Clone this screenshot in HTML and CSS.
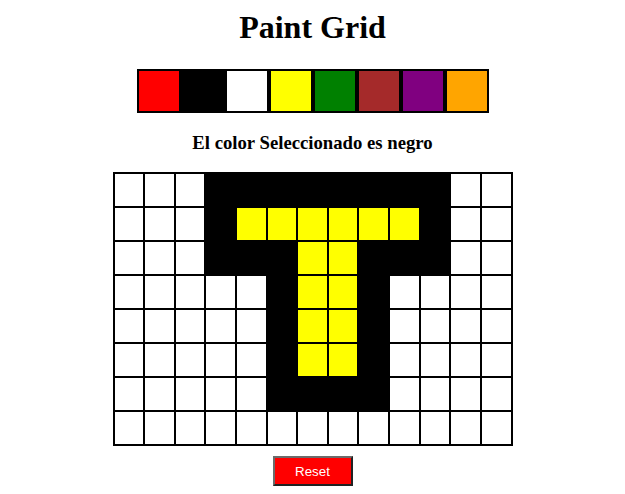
FILE: index.html
```html
<!DOCTYPE html>
<html lang="es">
<head>
<meta charset="utf-8">
<title>Paint Grid</title>
<link rel="stylesheet" href="styles.css">
</head>
<body>
<main class="app">
  <h1 class="title">Paint Grid</h1>
  <div class="palette">
    <div class="swatch red"></div>
    <div class="swatch black"></div>
    <div class="swatch white"></div>
    <div class="swatch yellow"></div>
    <div class="swatch green"></div>
    <div class="swatch brown"></div>
    <div class="swatch purple"></div>
    <div class="swatch orange"></div>
  </div>
  <h3 class="selected">El color Seleccionado es negro</h3>
  <div class="grid">
    <div class="cell"></div><div class="cell"></div><div class="cell"></div><div class="cell k"></div><div class="cell k"></div><div class="cell k"></div><div class="cell k"></div><div class="cell k"></div><div class="cell k"></div><div class="cell k"></div><div class="cell k"></div><div class="cell"></div><div class="cell"></div>
    <div class="cell"></div><div class="cell"></div><div class="cell"></div><div class="cell k"></div><div class="cell y"></div><div class="cell y"></div><div class="cell y"></div><div class="cell y"></div><div class="cell y"></div><div class="cell y"></div><div class="cell k"></div><div class="cell"></div><div class="cell"></div>
    <div class="cell"></div><div class="cell"></div><div class="cell"></div><div class="cell k"></div><div class="cell k"></div><div class="cell k"></div><div class="cell y"></div><div class="cell y"></div><div class="cell k"></div><div class="cell k"></div><div class="cell k"></div><div class="cell"></div><div class="cell"></div>
    <div class="cell"></div><div class="cell"></div><div class="cell"></div><div class="cell"></div><div class="cell"></div><div class="cell k"></div><div class="cell y"></div><div class="cell y"></div><div class="cell k"></div><div class="cell"></div><div class="cell"></div><div class="cell"></div><div class="cell"></div>
    <div class="cell"></div><div class="cell"></div><div class="cell"></div><div class="cell"></div><div class="cell"></div><div class="cell k"></div><div class="cell y"></div><div class="cell y"></div><div class="cell k"></div><div class="cell"></div><div class="cell"></div><div class="cell"></div><div class="cell"></div>
    <div class="cell"></div><div class="cell"></div><div class="cell"></div><div class="cell"></div><div class="cell"></div><div class="cell k"></div><div class="cell y"></div><div class="cell y"></div><div class="cell k"></div><div class="cell"></div><div class="cell"></div><div class="cell"></div><div class="cell"></div>
    <div class="cell"></div><div class="cell"></div><div class="cell"></div><div class="cell"></div><div class="cell"></div><div class="cell k"></div><div class="cell k"></div><div class="cell k"></div><div class="cell k"></div><div class="cell"></div><div class="cell"></div><div class="cell"></div><div class="cell"></div>
    <div class="cell"></div><div class="cell"></div><div class="cell"></div><div class="cell"></div><div class="cell"></div><div class="cell"></div><div class="cell"></div><div class="cell"></div><div class="cell"></div><div class="cell"></div><div class="cell"></div><div class="cell"></div><div class="cell"></div>
  </div>
  <button class="reset" type="button">Reset</button>
</main>
</body>
</html>
```
FILE: styles.css
```css
html, body {
  margin: 0;
  padding: 0;
  background: #ffffff;
}

body {
  font-family: "Liberation Serif", "Times New Roman", serif;
  color: #000000;
}

.app {
  display: flex;
  flex-direction: column;
  align-items: center;
  padding-top: 9px;
}

.title {
  margin: 0;
  font-size: 32px;
  font-weight: bold;
  line-height: normal;
}

.palette {
  margin-top: 23px;
  display: flex;
  gap: 4px;
  border: 2px solid #000000;
  background: #000000;
}

.swatch {
  width: 40px;
  height: 40px;
}

.red { background: #ff0000; }
.black { background: #000000; }
.white { background: #ffffff; }
.yellow { background: #ffff00; }
.green { background: #008000; }
.brown { background: #a52a2a; }
.purple { background: #800080; }
.orange { background: #ffa500; }

.selected {
  margin: 19px 0 0 0;
  font-size: 18.72px;
  font-weight: bold;
  line-height: normal;
}

.grid {
  margin-top: 18px;
  width: 400px;
  box-sizing: border-box;
  display: grid;
  grid-template-columns: repeat(13, 1fr);
  grid-auto-rows: 32px;
  gap: 2px;
  padding: 2px;
  background: #000000;
}

.cell {
  background: #ffffff;
}

.cell.k { background: #000000; }
.cell.y { background: #ffff00; }

.reset {
  margin-top: 10px;
  width: 80px;
  height: 30px;
  box-sizing: border-box;
  background: #ff0000;
  color: #ffffff;
  font-family: "Liberation Sans", Arial, sans-serif;
  font-size: 13.33px;
  border-style: solid;
  border-width: 2px;
  border-color: #6b6b6b #222222 #222222 #6b6b6b;
  padding: 0;
}
```
